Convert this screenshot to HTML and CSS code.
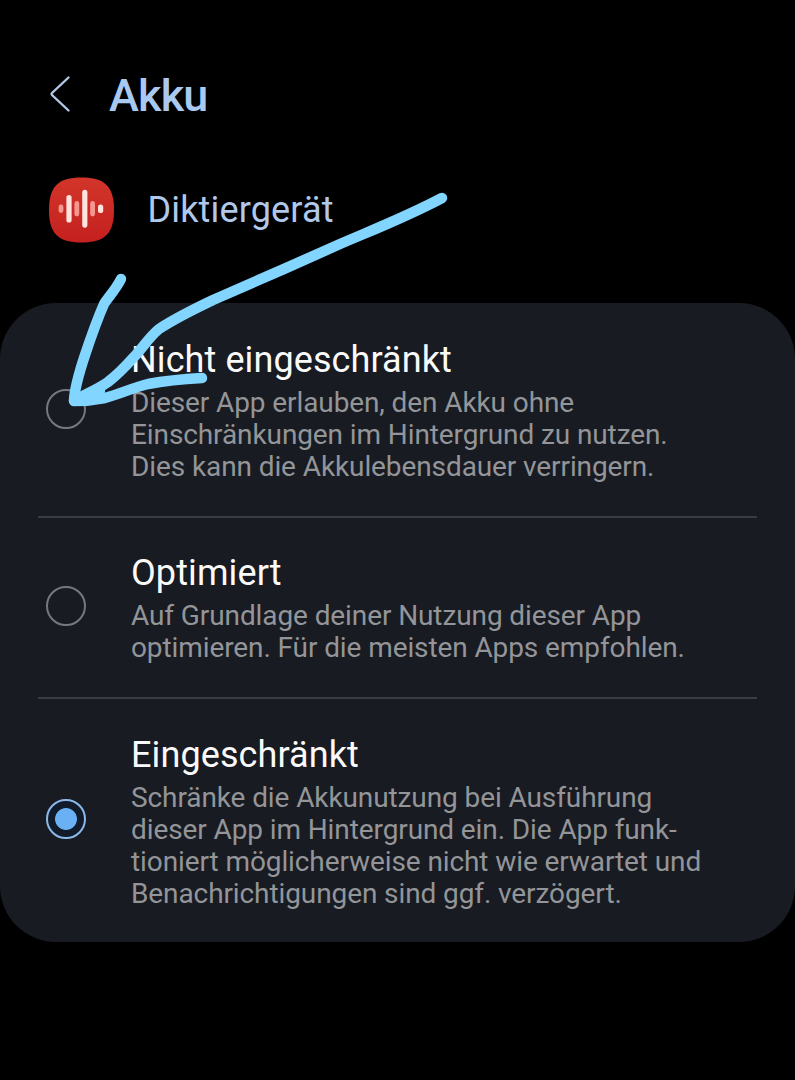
FILE: index.html
```html
<!DOCTYPE html>
<html lang="de">

<head>
    <meta charset="UTF-8">
    <meta name="viewport" content="width=device-width, initial-scale=1.0">
    <title>Akku</title>
    <link rel="stylesheet" href="styles.css">
</head>

<body>
    <div class="screen">
        <div class="header">
            <svg class="back" width="24" height="40" viewBox="0 0 24 40">
                <path d="M20.5 3.5 L4 19 Q3 20 4 21 L20.5 36.5" />
            </svg>
            <h1>Akku</h1>
        </div>

        <div class="app">
            <svg class="app-icon" width="66" height="66" viewBox="0 0 66 66">
                <defs>
                    <linearGradient id="red" x1="0" y1="0" x2="0" y2="1">
                        <stop offset="0" stop-color="#d23529" />
                        <stop offset="1" stop-color="#c4201f" />
                    </linearGradient>
                </defs>
                <path fill="url(#red)" d="M33.5 0.5 C57 0.5 66 9.5 66 33 C66 56.5 57 65.5 33.5 65.5 C10 65.5 1 56.5 1 33 C1 9.5 10 0.5 33.5 0.5 Z" />
                <g fill="#f5968f">
                    <rect x="10.6" y="27.5" width="4.8" height="8.5" rx="2.4" />
                    <rect x="26.4" y="24" width="4.8" height="15.5" rx="2.4" />
                    <rect x="42.2" y="24" width="4.8" height="15.5" rx="2.4" />
                </g>
                <g fill="#ffe3de">
                    <rect x="18.4" y="18" width="5.2" height="27.5" rx="2.6" />
                    <rect x="34.2" y="12.7" width="5.2" height="38" rx="2.6" />
                    <rect x="50" y="27.5" width="5.2" height="8.5" rx="2.6" />
                </g>
            </svg>
            <span class="app-name">Diktiergerät</span>
        </div>

        <ul class="card">
            <li class="option">
                <span class="radio"></span>
                <div class="text">
                    <h2>Nicht eingeschränkt</h2>
                    <p>Dieser App erlauben, den Akku ohne<br>Einschränkungen im Hintergrund zu nutzen.<br>Dies kann die Akkulebensdauer verringern.</p>
                </div>
            </li>
            <li class="option">
                <span class="radio"></span>
                <div class="text">
                    <h2>Optimiert</h2>
                    <p>Auf Grundlage deiner Nutzung dieser App<br>optimieren. Für die meisten Apps empfohlen.</p>
                </div>
            </li>
            <li class="option">
                <span class="radio active"></span>
                <div class="text">
                    <h2>Eingeschränkt</h2>
                    <p>Schränke die Akkunutzung bei Ausführung<br>dieser App im Hintergrund ein. Die App funk-<br>tioniert möglicherweise nicht wie erwartet und<br>Benachrichtigungen sind ggf. verzögert.</p>
                </div>
            </li>
        </ul>

        <!-- hand-drawn arrow -->
        <svg class="arrow" width="795" height="1080" viewBox="0 0 795 1080">
            <path d="M442 198 C406 217 375 229 340 244 C300 262 250 284 213 300 C190 311 174 319 159 329 C149 337 142 349 133 358 C125 367 117 375 108 382 C98 389 88 393 77 399" />
            <path d="M121 279 C115 291 108 297 104 304 C97 320 91 337 85 355 C80 370 75 386 74 400" />
            <path d="M74 401 C87 401 95 400 105 398 C120 394 132 388 148 384 C164 381 184 379 202 378" />
            <path d="M80 398 L100 391" />
        </svg>
    </div>
</body>

</html>
```
FILE: styles.css
```css
* {
    margin: 0;
    padding: 0;
    box-sizing: border-box;
}

body {
    background-color: #000;
    font-family: Roboto, "Liberation Sans", sans-serif;
}

li {
    list-style: none;
}

.screen {
    position: relative;
    width: 795px;
    height: 1080px;
    overflow: hidden;
}

.header {
    height: 177px;
    padding: 69px 0 0 48px;
    display: flex;
    align-items: flex-start;
}

.back {
    margin-top: 5px;
    fill: none;
    stroke: #b3c8e6;
    stroke-width: 2.4;
    stroke-linecap: round;
}

.header h1 {
    margin-left: 37px;
    font-size: 45px;
    line-height: 53px;
    font-weight: 500;
    letter-spacing: -0.8px;
    color: #a9c9f0;
}

.app {
    height: 126px;
    padding-left: 48px;
    display: flex;
    align-items: flex-start;
}

.app-name {
    margin-left: 33.5px;
    padding-top: 12px;
    font-size: 36px;
    line-height: 42px;
    letter-spacing: 0.15px;
    color: #b0c8ea;
}

.card {
    height: 639px;
    background-color: #181b22;
    border-radius: 56px;
}

.option {
    display: flex;
    align-items: center;
    margin: 0 38px;
    padding: 34.5px 0 32.5px 7.5px;
    border-bottom: 2px solid #393c42;
}

.option:first-child {
    padding-top: 36px;
    padding-bottom: 32px;
}

.option:last-child {
    border-bottom: none;
}

.radio {
    width: 40px;
    height: 40px;
    margin-top: -4px;
    border: 2px solid #76787e;
    border-radius: 50%;
    flex: none;
}

.radio.active {
    margin-top: -5px;
    border-color: #8bb9ea;
    background: radial-gradient(circle, #69b0f4 10.5px, #111b29 11.3px);
}

.text {
    margin-left: 45.5px;
    white-space: nowrap;
}

.text h2 {
    font-size: 36px;
    line-height: 42px;
    font-weight: 400;
    letter-spacing: 0.1px;
    color: #fafafa;
}

.text p {
    margin-top: 6px;
    font-size: 28px;
    line-height: 32.2px;
    letter-spacing: -0.1px;
    color: #939599;
}

.arrow {
    position: absolute;
    left: 0;
    top: 0;
    fill: none;
    stroke: #82d5ff;
    stroke-width: 10.5;
    stroke-linecap: round;
    stroke-linejoin: round;
}
```
